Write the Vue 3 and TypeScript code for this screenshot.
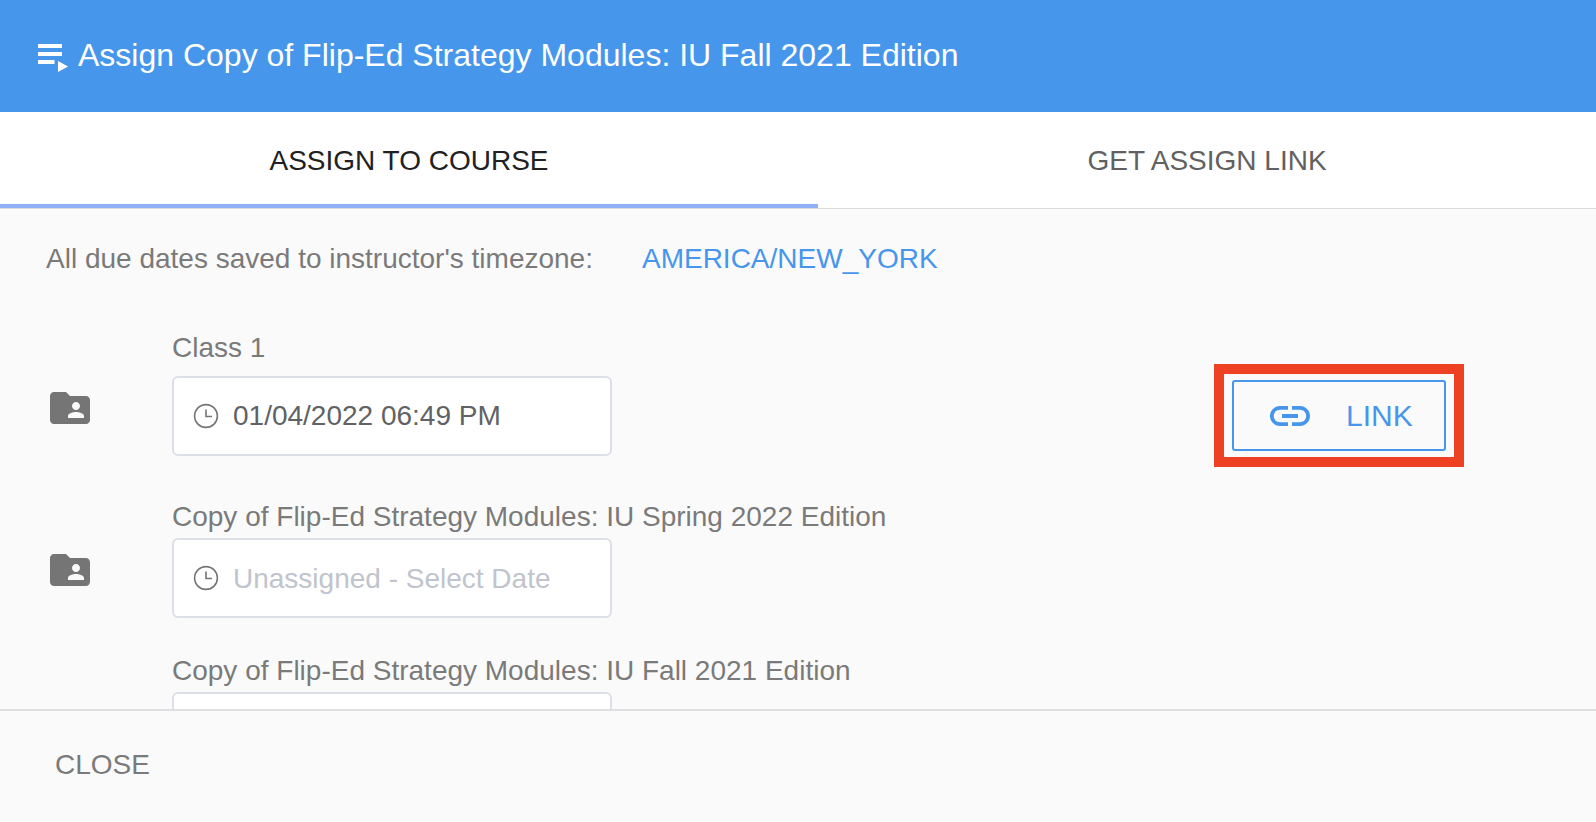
<script setup lang="ts">
import { ref } from 'vue'

interface Row {
  name: string
  date: string
  cls: string
}

const title = 'Assign Copy of Flip-Ed Strategy Modules: IU Fall 2021 Edition'

const rows = ref<Row[]>([
  { name: 'Class 1', date: '01/04/2022 06:49 PM', cls: 'row--first' },
  { name: 'Copy of Flip-Ed Strategy Modules: IU Spring 2022 Edition', date: '', cls: 'row--second' },
  { name: 'Copy of Flip-Ed Strategy Modules: IU Fall 2021 Edition', date: '', cls: 'row--third' }
])
</script>

<template>
  <div class="dialog">
    <header class="title-bar">
      <svg class="title-icon" width="30" height="28" viewBox="0 0 30 28" fill="#fff">
        <rect x="0" y="0" width="24" height="4" />
        <rect x="0" y="8" width="24" height="4" />
        <rect x="0" y="16" width="16.5" height="4" />
        <path d="M20 17v11l10-5.5z" />
      </svg>
      <span class="title-text">{{ title }}</span>
    </header>

    <nav class="tabs">
      <div class="tab tab--active">ASSIGN TO COURSE</div>
      <div class="tab">GET ASSIGN LINK</div>
    </nav>

    <main class="content">
      <div class="timezone">
        <span>All due dates saved to instructor's timezone:</span>
        <span class="timezone-value">AMERICA/NEW_YORK</span>
      </div>

      <div v-for="(row, i) in rows" :key="row.name" class="row" :class="row.cls">
        <svg class="folder" width="48" height="48" viewBox="0 0 24 24" fill="#757575">
          <path d="M20 6h-8l-2-2H4c-1.1 0-1.99.9-1.99 2L2 18c0 1.1.9 2 2 2h16c1.1 0 2-.9 2-2V8c0-1.1-.9-2-2-2zm-5 3c1.1 0 2 .9 2 2s-.9 2-2 2-2-.9-2-2 .9-2 2-2zm4 8h-8v-1c0-1.33 2.67-2 4-2s4 .67 4 2v1z" />
        </svg>
        <div class="field">
          <div class="field-label">{{ row.name }}</div>
          <div class="date-input">
            <svg class="clock" width="26" height="26" viewBox="0 0 26 26" fill="none" stroke="#757575" stroke-width="1.6">
              <circle cx="13" cy="13" r="11.4" />
              <path d="M13 6.5v7h6" />
            </svg>
            <span v-if="row.date" class="date-value">{{ row.date }}</span>
            <span v-else class="date-placeholder">Unassigned - Select Date</span>
          </div>
        </div>
        <div v-if="i === 0" class="highlight">
          <button class="link-btn" type="button">
            <svg width="48" height="48" viewBox="0 0 24 24" fill="#4696ec">
              <path d="M3.9 12c0-1.71 1.39-3.1 3.1-3.1h4V7H7c-2.76 0-5 2.24-5 5s2.24 5 5 5h4v-1.9H7c-1.71 0-3.1-1.39-3.1-3.1zM8 13h8v-2H8v2zm9-6h-4v1.9h4c1.71 0 3.1 1.39 3.1 3.1s-1.39 3.1-3.1 3.1h-4V17h4c2.76 0 5-2.24 5-5s-2.24-5-5-5z" />
            </svg>
            <span>LINK</span>
          </button>
        </div>
      </div>
    </main>

    <footer class="actions">
      <span class="close">CLOSE</span>
    </footer>
  </div>
</template>

<style>
html,
body {
  margin: 0;
  background: #fafafa;
}
</style>

<style scoped>
.dialog {
  width: 1596px;
  height: 822px;
  display: flex;
  flex-direction: column;
  overflow: hidden;
  background: #fafafa;
  font-family: "Liberation Sans", Arial, sans-serif;
}

.title-bar {
  flex: none;
  height: 112px;
  display: flex;
  align-items: center;
  padding-left: 38px;
  background: #4696ec;
  color: #fff;
}
.title-icon {
  flex: none;
  margin-top: 4px;
}
.title-text {
  margin-left: 10px;
  padding-bottom: 2px;
  font-size: 32px;
  line-height: 34px;
}

.tabs {
  flex: none;
  display: flex;
  height: 97px;
  box-sizing: border-box;
  background: #fff;
  border-bottom: 1px solid #dcdcdc;
}
.tab {
  flex: 1;
  display: flex;
  align-items: center;
  justify-content: center;
  box-sizing: border-box;
  height: 96px;
  padding-top: 2px;
  font-size: 28px;
  color: #616161;
}
.tab--active {
  flex: none;
  width: 818px;
  padding-top: 6px;
  color: #212121;
  border-bottom: 4px solid #8fb0f7;
}

.content {
  flex: 1;
  min-height: 0;
  overflow: hidden;
  padding: 35px 0 0 46px;
}

.timezone {
  display: flex;
  font-size: 28px;
  line-height: 30px;
  color: #7a7a7a;
}
.timezone-value {
  margin-left: 49px;
  color: #4696ec;
}

.row {
  display: flex;
  align-items: flex-end;
}
.row--first {
  margin-top: 59px;
}
.row--second {
  margin-top: 46px;
}
.row--third {
  margin-top: 38px;
}
.row--first .field-label {
  margin-bottom: 13px;
}
.row--second .field-label {
  margin-bottom: 6px;
}
.row--third .field-label {
  margin-bottom: 6px;
}

.folder {
  flex: none;
  margin-bottom: 24px;
}
.row--third .folder {
  margin-bottom: 22px;
}

.field {
  margin-left: 78px;
}
.field-label {
  font-size: 28px;
  line-height: 30px;
  color: #7a7a7a;
  white-space: nowrap;
}

.date-input {
  width: 440px;
  height: 80px;
  box-sizing: border-box;
  display: flex;
  align-items: center;
  padding-left: 19px;
  background: #fff;
  border: 2px solid #dcdfe6;
  border-radius: 6px;
  font-size: 28px;
}
.clock {
  flex: none;
}
.date-value {
  margin-left: 14px;
  color: #606266;
}
.date-placeholder {
  margin-left: 14px;
  padding-top: 2px;
  color: #c0c4cc;
}

.highlight {
  margin-left: auto;
  margin-right: 132px;
  margin-bottom: -11px;
  width: 250px;
  height: 103px;
  box-sizing: border-box;
  padding: 6px 8px;
  border: 10px solid #ee4023;
}
.link-btn {
  width: 100%;
  height: 100%;
  box-sizing: border-box;
  display: flex;
  align-items: center;
  padding: 0 0 0 32px;
  background: transparent;
  border: 2px solid #4696ec;
  border-radius: 3px;
  color: #4696ec;
  font-family: inherit;
  font-size: 30px;
}
.link-btn span {
  margin-left: 32px;
}

.actions {
  flex: none;
  height: 113px;
  box-sizing: border-box;
  display: flex;
  align-items: center;
  padding: 0 0 4px 55px;
  background: #fafafa;
  border-top: 2px solid #e0e0e3;
}
.close {
  font-size: 28px;
  color: #7a7a7a;
}
</style>
